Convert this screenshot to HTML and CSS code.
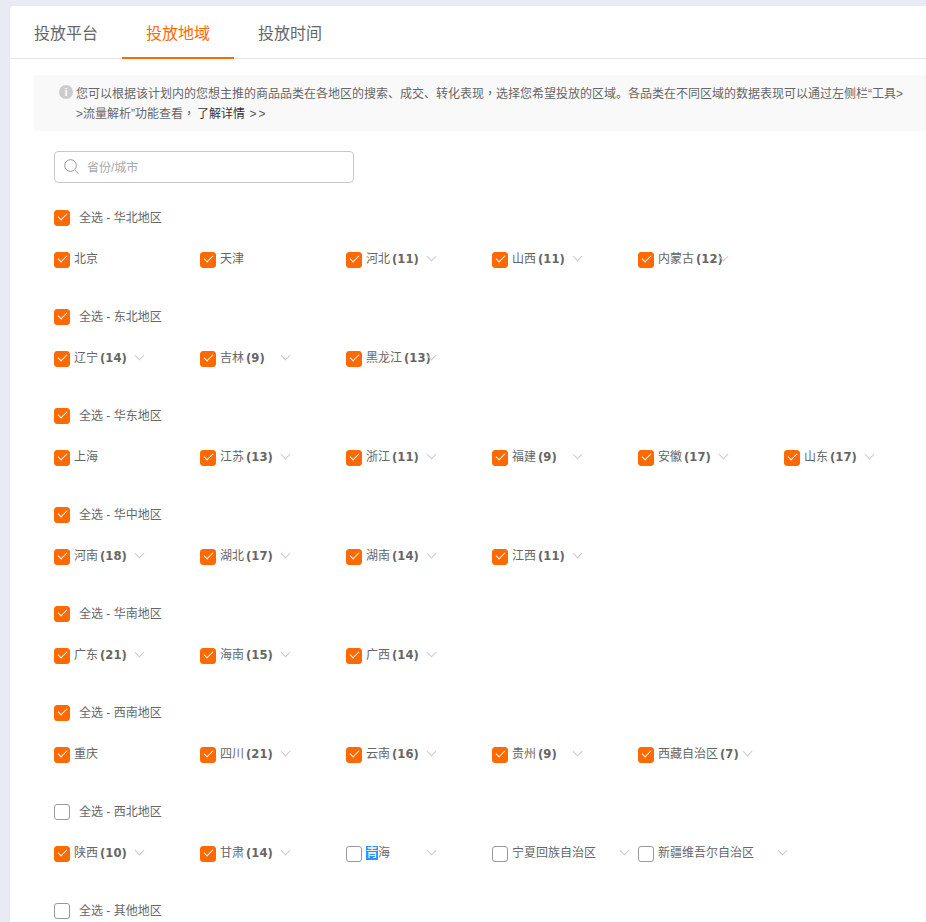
FILE: index.html
```html
<!DOCTYPE html>
<html lang="zh-CN">
<head>
    <meta charset="utf-8">
    <title>投放地域</title>
    <link rel="stylesheet" href="styles.css">
</head>
<body>
    <div class="card">
        <div class="tabs">
            <div class="tab">投放平台</div>
            <div class="tab active">投放地域</div>
            <div class="tab">投放时间</div>
        </div>

        <div class="notice">
            <span class="info-icon">i</span>
            <p>您可以根据该计划内的您想主推的商品品类在各地区的搜索、成交、转化表现<span class="comma" lang="zh-TW">，</span>选择您希望投放的区域。各品类在不同区域的数据表现可以通过左侧栏“工具&gt;<br>&gt;流量解析”功能查看<span class="comma" lang="zh-TW">，</span><a href="#">了解详情 <span class="more">&gt;&gt;</span></a></p>
        </div>

        <div class="regions">
            <div class="search">
                <svg width="16" height="16" viewBox="0 0 16 16" fill="none" stroke="#999" stroke-width="1">
                    <circle cx="6.5" cy="6.5" r="5.8"/>
                    <path d="M10.8 11l3.7 3.7"/>
                </svg>
                <input type="text" placeholder="省份/城市">
            </div>

            <div class="group">
                <div class="group-title"><span class="check on"></span><span>全选 - 华北地区</span></div>
                <div class="items">
                    <div class="item"><span class="check on"></span><span class="name">北京</span></div>
                    <div class="item"><span class="check on"></span><span class="name">天津</span></div>
                    <div class="item"><span class="check on"></span><span class="name">河北<b>(11)</b></span><i class="arrow"></i></div>
                    <div class="item"><span class="check on"></span><span class="name">山西<b>(11)</b></span><i class="arrow"></i></div>
                    <div class="item"><span class="check on"></span><span class="name">内蒙古<b>(12)</b></span><i class="arrow"></i></div>
                </div>
            </div>

            <div class="group">
                <div class="group-title"><span class="check on"></span><span>全选 - 东北地区</span></div>
                <div class="items">
                    <div class="item"><span class="check on"></span><span class="name">辽宁<b>(14)</b></span><i class="arrow"></i></div>
                    <div class="item"><span class="check on"></span><span class="name">吉林<b>(9)</b></span><i class="arrow"></i></div>
                    <div class="item"><span class="check on"></span><span class="name">黑龙江<b>(13)</b></span><i class="arrow"></i></div>
                </div>
            </div>

            <div class="group">
                <div class="group-title"><span class="check on"></span><span>全选 - 华东地区</span></div>
                <div class="items">
                    <div class="item"><span class="check on"></span><span class="name">上海</span></div>
                    <div class="item"><span class="check on"></span><span class="name">江苏<b>(13)</b></span><i class="arrow"></i></div>
                    <div class="item"><span class="check on"></span><span class="name">浙江<b>(11)</b></span><i class="arrow"></i></div>
                    <div class="item"><span class="check on"></span><span class="name">福建<b>(9)</b></span><i class="arrow"></i></div>
                    <div class="item"><span class="check on"></span><span class="name">安徽<b>(17)</b></span><i class="arrow"></i></div>
                    <div class="item"><span class="check on"></span><span class="name">山东<b>(17)</b></span><i class="arrow"></i></div>
                </div>
            </div>

            <div class="group">
                <div class="group-title"><span class="check on"></span><span>全选 - 华中地区</span></div>
                <div class="items">
                    <div class="item"><span class="check on"></span><span class="name">河南<b>(18)</b></span><i class="arrow"></i></div>
                    <div class="item"><span class="check on"></span><span class="name">湖北<b>(17)</b></span><i class="arrow"></i></div>
                    <div class="item"><span class="check on"></span><span class="name">湖南<b>(14)</b></span><i class="arrow"></i></div>
                    <div class="item"><span class="check on"></span><span class="name">江西<b>(11)</b></span><i class="arrow"></i></div>
                </div>
            </div>

            <div class="group">
                <div class="group-title"><span class="check on"></span><span>全选 - 华南地区</span></div>
                <div class="items">
                    <div class="item"><span class="check on"></span><span class="name">广东<b>(21)</b></span><i class="arrow"></i></div>
                    <div class="item"><span class="check on"></span><span class="name">海南<b>(15)</b></span><i class="arrow"></i></div>
                    <div class="item"><span class="check on"></span><span class="name">广西<b>(14)</b></span><i class="arrow"></i></div>
                </div>
            </div>

            <div class="group">
                <div class="group-title"><span class="check on"></span><span>全选 - 西南地区</span></div>
                <div class="items">
                    <div class="item"><span class="check on"></span><span class="name">重庆</span></div>
                    <div class="item"><span class="check on"></span><span class="name">四川<b>(21)</b></span><i class="arrow"></i></div>
                    <div class="item"><span class="check on"></span><span class="name">云南<b>(16)</b></span><i class="arrow"></i></div>
                    <div class="item"><span class="check on"></span><span class="name">贵州<b>(9)</b></span><i class="arrow"></i></div>
                    <div class="item"><span class="check on"></span><span class="name name-tibet">西藏自治区<b>(7)</b></span><i class="arrow"></i></div>
                </div>
            </div>

            <div class="group">
                <div class="group-title"><span class="check"></span><span>全选 - 西北地区</span></div>
                <div class="items">
                    <div class="item"><span class="check on"></span><span class="name">陕西<b>(10)</b></span><i class="arrow"></i></div>
                    <div class="item"><span class="check on"></span><span class="name">甘肃<b>(14)</b></span><i class="arrow"></i></div>
                    <div class="item"><span class="check"></span><span class="name"><span class="selected">青</span>海</span><i class="arrow"></i></div>
                    <div class="item"><span class="check"></span><span class="name name-ningxia">宁夏回族自治区</span><i class="arrow"></i></div>
                    <div class="item"><span class="check"></span><span class="name name-xinjiang">新疆维吾尔自治区</span><i class="arrow"></i></div>
                </div>
            </div>

            <div class="group">
                <div class="group-title"><span class="check"></span><span>全选 - 其他地区</span></div>
            </div>
        </div>
    </div>
</body>
</html>
```

FILE: styles.css
```css
html, body {
    height: 100%;
    overflow: hidden;
}

body {
    margin: 0;
    padding: 6px 0 0 10px;
    box-sizing: border-box;
    background-color: #e8ebf3;
    font-family: "Liberation Sans", "Noto Sans CJK SC", sans-serif;
    font-size: 12px;
    color: #666;
}

.card {
    background-color: #fff;
    border-radius: 4px 0 0 0;
    min-height: 100%;
}

.tabs {
    display: flex;
    height: 52px;
    border-bottom: 1px solid #e5e5e5;
}

.tab {
    box-sizing: border-box;
    width: 112px;
    height: 53px;
    padding-top: 3px;
    line-height: 49px;
    border-bottom: 2px solid transparent;
    text-align: center;
    font-size: 16px;
    color: #666;
}

.tab.active {
    color: #ff6a00;
    border-bottom-color: #ff6a00;
}

.notice {
    display: flex;
    margin: 16px 0 0 24px;
    padding: 9px 0 7px 25px;
    background-color: #f9f9f9;
    line-height: 20px;
    white-space: nowrap;
}

.notice p {
    margin: 0;
}

.notice a {
    margin-left: 2px;
    color: #333;
    text-decoration: none;
}

.comma {
    font-family: "Noto Sans CJK TC", sans-serif;
    line-height: 0;
}

.more {
    margin-left: 1px;
    letter-spacing: 2px;
    color: #555;
}

.info-icon {
    flex: none;
    width: 14px;
    height: 14px;
    margin: 1px 3px 0 0;
    border-radius: 50%;
    background-color: #ccc;
    color: #fff;
    font-size: 11px;
    font-weight: bold;
    line-height: 14px;
    text-align: center;
}

.regions {
    padding: 20px 0 0 44px;
}

.search {
    display: flex;
    align-items: center;
    box-sizing: border-box;
    width: 300px;
    height: 32px;
    padding-left: 9px;
    margin-bottom: 27px;
    border: 1px solid #c8c8c8;
    border-radius: 4px;
}

.search input {
    flex: 1;
    min-width: 0;
    margin: 2px 0 0 7px;
    padding: 0;
    border: none;
    outline: none;
    font: inherit;
    color: #666;
}

.search input::placeholder {
    color: #aaa;
}

.group {
    margin-bottom: 41px;
}

.group-title {
    display: flex;
    gap: 9px;
    margin-bottom: 26px;
    line-height: 16px;
}

.items {
    display: grid;
    grid-template-columns: repeat(6, 146px);
}

.item {
    display: flex;
    gap: 4px;
    height: 16px;
    line-height: 14px;
    white-space: nowrap;
}

.check {
    flex: none;
    display: flex;
    justify-content: center;
    box-sizing: border-box;
    width: 16px;
    height: 16px;
    border: 1px solid #999;
    border-radius: 3px;
    background-color: #fff;
}

.check.on {
    border-color: #ff6a00;
    background-color: #ff6a00;
}

.check.on::after {
    content: "";
    width: 8px;
    height: 4px;
    margin-top: 2px;
    border-left: 1.5px solid #fff;
    border-bottom: 1.5px solid #fff;
    transform: rotate(-45deg);
}

.name {
    flex: none;
    width: 57px;
}

.name b {
    margin-left: 2px;
    font-family: "DejaVu Sans", sans-serif;
    font-size: 11.6px;
}

.name-tibet {
    width: 81px;
}

.name-ningxia {
    width: 104px;
}

.name-xinjiang {
    width: 116px;
}

.selected {
    background-color: #3390ff;
    color: #fff;
}

.arrow {
    flex: none;
    box-sizing: border-box;
    width: 7px;
    height: 7px;
    margin: 1px 0 0 1px;
    border-right: 1px solid #ccc;
    border-bottom: 1px solid #ccc;
    transform: rotate(45deg);
}
```
